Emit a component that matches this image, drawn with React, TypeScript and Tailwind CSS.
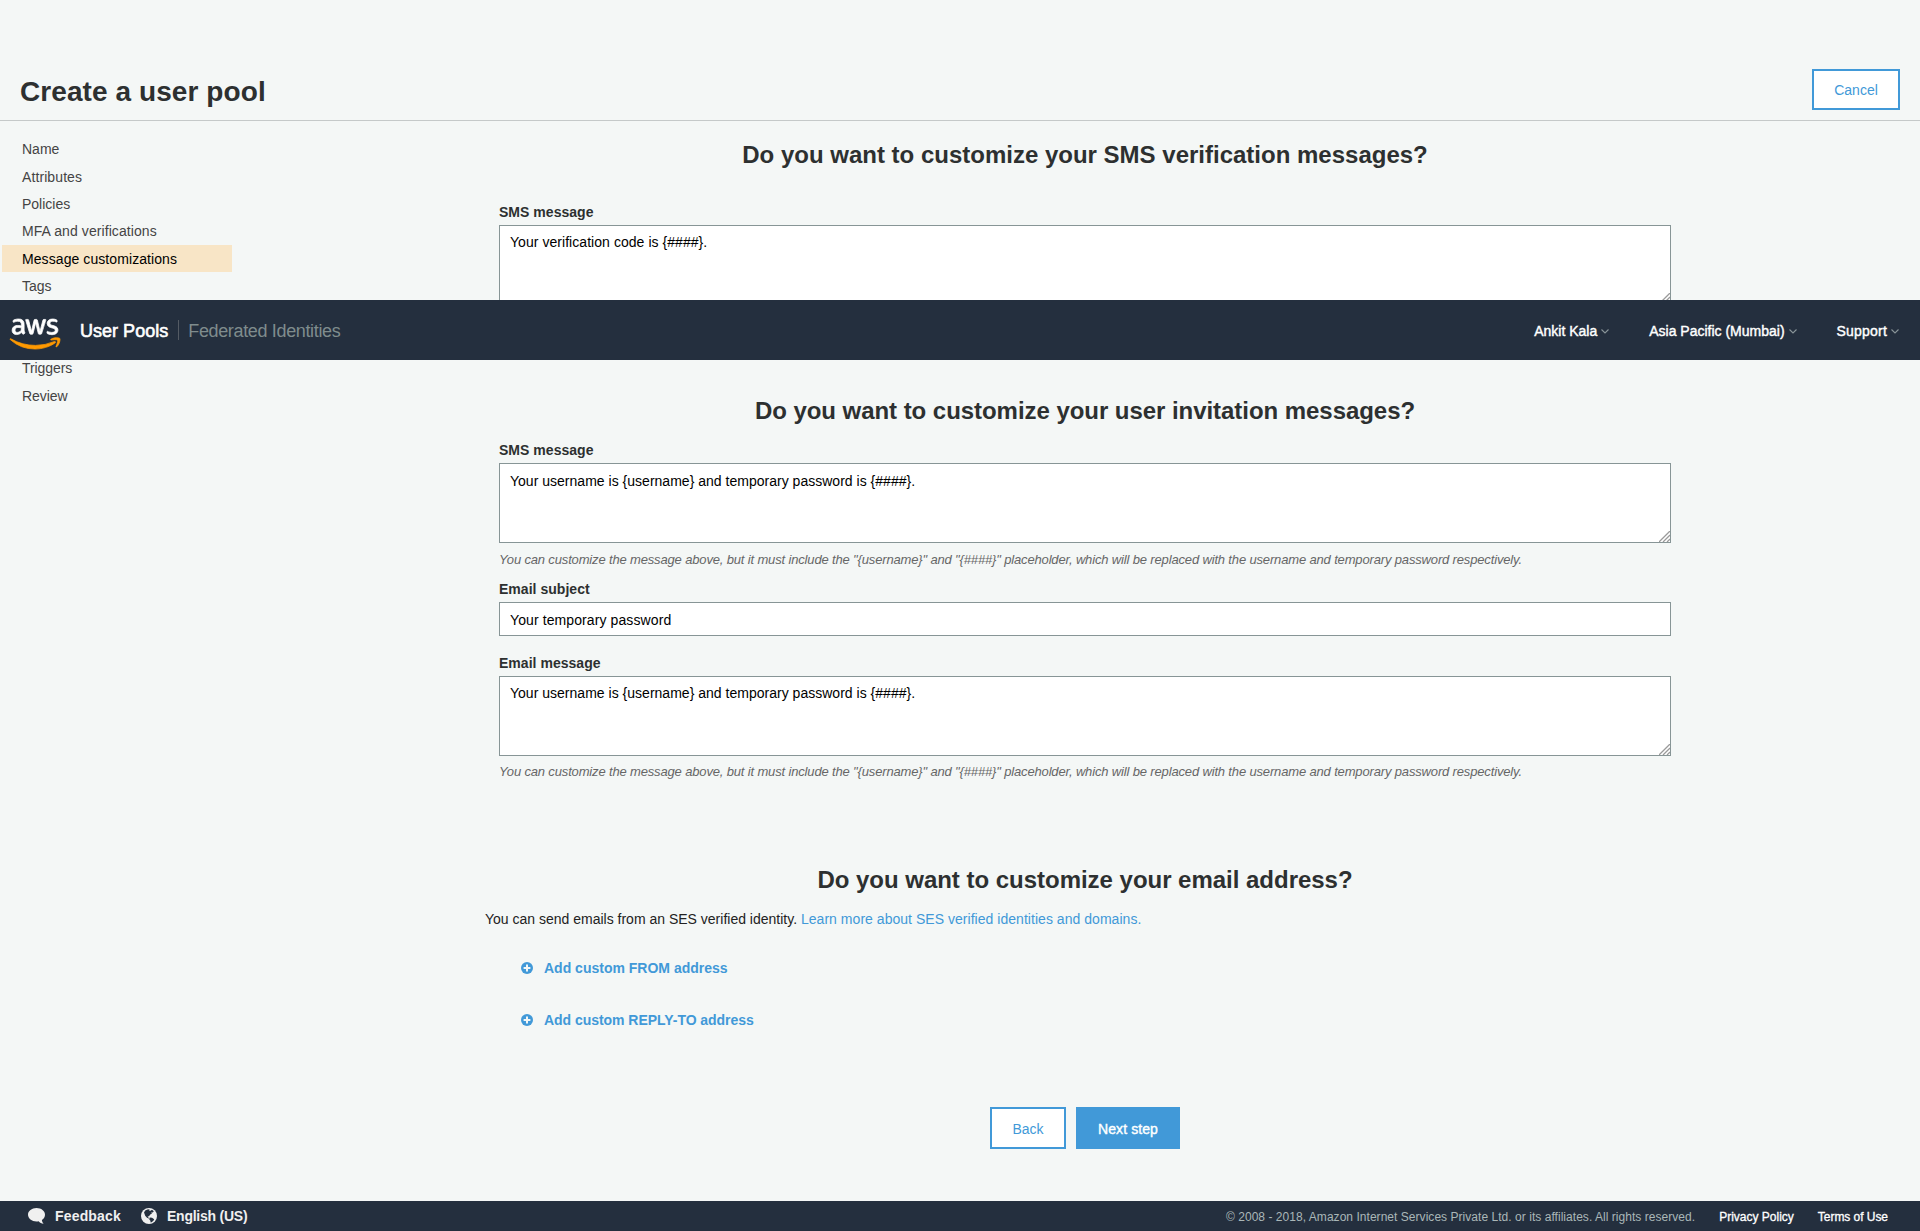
import type { ReactNode } from "react";
import { FaAws } from "react-icons/fa6";

const STEPS: { label: string; tracking?: string; active?: boolean }[] = [
  { label: "Name" },
  { label: "Attributes", tracking: "tracking-[0.096px] pt-px" },
  { label: "Policies" },
  { label: "MFA and verifications", tracking: "tracking-[0.083px]" },
  { label: "Message customizations", tracking: "tracking-[0.08px]", active: true },
  { label: "Tags" },
  { label: "Devices" },
  { label: "App clients" },
  { label: "Triggers", tracking: "tracking-[-0.08px]" },
  { label: "Review", tracking: "tracking-[-0.08px]" },
];

const INVITATION = "Your username is {username} and temporary password is {####}.";
const HINT =
  'You can customize the message above, but it must include the "{username}" and "{####}" placeholder, which will be replaced with the username and temporary password respectively.';

function Heading({ className, children }: { className: string; children: ReactNode }) {
  return (
    <h2 className={`text-center text-2xl leading-[27px] font-bold text-[#2d3030] ${className}`}>{children}</h2>
  );
}

function Label({ className, children }: { className: string; children: ReactNode }) {
  return (
    <label className={`block text-sm leading-5 font-bold tracking-[0.03px] text-[#2d3030] ${className}`}>
      {children}
    </label>
  );
}

function MessageBox({ value, className }: { value: string; className: string }) {
  return (
    <div className="relative mt-[3px] h-20">
      <textarea
        defaultValue={value}
        spellCheck={false}
        className={`block h-20 w-full resize-none border border-[#879596] bg-white px-2.5 text-sm leading-5 text-black outline-none ${className}`}
      />
      <svg className="absolute right-px bottom-px size-[11px]" viewBox="0 0 11 11" fill="none">
        <path d="M0 11 11 0M4 11l7-7M8 11l3-3" stroke="#9a9a9a" strokeWidth="1.3" />
      </svg>
    </div>
  );
}

function Hint({ className }: { className: string }) {
  return (
    <p className={`text-[13px] leading-[15px] whitespace-nowrap italic tracking-[-0.154px] text-[#666] ${className}`}>
      {HINT}
    </p>
  );
}

function AddLink({ className, children }: { className: string; children: ReactNode }) {
  return (
    <a className={`ml-9 flex h-5 items-center text-sm leading-5 font-bold text-[#4199d8] ${className}`}>
      <svg className="mr-[11px] size-3" viewBox="0 0 12 12">
        <circle cx="6" cy="6" r="6" fill="#4199d8" />
        <path d="M6 2.600v6.800M2.600 6h6.800" stroke="#f4f7f6" strokeWidth="2" />
      </svg>
      {children}
    </a>
  );
}

function NavMenu({ className, children }: { className: string; children: ReactNode }) {
  return (
    <a className={`flex items-center text-sm leading-5 text-white [-webkit-text-stroke:0.4px_white] ${className}`}>
      {children}
      <svg className="mt-px ml-1 h-[5px] w-2" viewBox="0 0 8 5" fill="none">
        <path d="M.5.5 4 4 7.500.5" stroke="#8a9599" strokeWidth="1.1" />
      </svg>
    </a>
  );
}

function NavBar() {
  return (
    <nav className="absolute inset-x-0 top-[300px] flex h-[60px] items-center bg-[#242f3e] pt-0.5 pr-[21px] pl-2.5">
      <svg className="absolute size-0">
        <linearGradient id="aws-fill" x1="0" y1="0" x2="0" y2="1">
          <stop offset="0.61" stopColor="#fff" />
          <stop offset="0.61" stopColor="#f90" />
        </linearGradient>
      </svg>
      <FaAws className="mt-[5px] h-10 w-[50px] overflow-visible [&_path]:fill-[url(#aws-fill)] [&_path]:stroke-[url(#aws-fill)] [&_path]:[stroke-width:10px]" />
      <a className="ml-5 text-lg leading-5 tracking-[0.02px] text-white [-webkit-text-stroke:0.6px_white]">
        User Pools
      </a>
      <span className="ml-2.5 h-5 w-px -translate-y-px bg-[#545b64]" />
      <a className="ml-[9px] text-lg leading-5 tracking-[-0.347px] text-[#7f8c8d]">Federated Identities</a>
      <NavMenu className="ml-auto">Ankit Kala</NavMenu>
      <NavMenu className="ml-10">Asia Pacific (Mumbai)</NavMenu>
      <NavMenu className="ml-10 tracking-[0.2px]">Support</NavMenu>
    </nav>
  );
}

function BubbleIcon() {
  return (
    <svg className="h-4 w-[17px]" viewBox="0 0 17 16" fill="#f0f0f0">
      <path d="M8.500 0C13.200 0 17 2.900 17 6.700c0 2.200-1.200 4.100-3.100 5.300.1 1.500.7 2.600 1.800 3.800-2.200-.2-3.900-1.100-5.100-2.600-.7.100-1.400.2-2.100.2C3.800 13.400 0 10.400 0 6.700S3.800 0 8.500 0Z" />
    </svg>
  );
}

function GlobeIcon() {
  return (
    <svg className="size-4" viewBox="0 0 16 16">
      <circle cx="8" cy="8" r="8" fill="#f0f0f0" />
      <path
        d="M4.200 2.600 6.400 1.400 8.600 1.200 8 2.400 9.600 2.800 11 1.700 12.800 3.200 11.800 4.600 10.400 4.300 10.800 5.800 9.200 6.600 8 8.200 6.600 8.400 7.200 9.600 8.400 9.900 7.800 10.600 6 9.800 4.200 7.800 3.400 5.600 3 4.400Z"
        fill="#242f3e"
      />
      <path d="M8.800 9.600 11 9.800 13.200 11.200 12.400 12.800 10.600 14.200 9.600 14.600 9.400 12.800 8.200 11.200Z" fill="#242f3e" />
    </svg>
  );
}

export default function App() {
  return (
    <div
      className="relative flex h-[1231px] w-[1920px] flex-col overflow-hidden bg-[#f4f7f6]"
      style={{ fontFamily: '"Liberation Sans", Arial, sans-serif' }}
    >
      <header className="flex h-[121px] shrink-0 items-end justify-between border-b border-[#c5c9c9] px-5">
        <h1 className="mb-[13px] text-[28px] leading-[31px] font-bold tracking-[0.08px] text-[#2d3030]">
          Create a user pool
        </h1>
        <button className="mb-2.5 h-[41px] w-[88px] border-2 border-[#4199d8] bg-white text-sm leading-5 text-[#4199d8]">
          Cancel
        </button>
      </header>

      <div className="flex flex-1 items-start">
        <ul className="ml-0.5 w-[230px] pt-[14.4px]">
          {STEPS.map((s) => (
            <li
              key={s.label}
              className={`flex h-[27.4px] items-center pl-5 text-sm leading-5 ${s.tracking ?? ""} ${
                s.active ? "bg-[#f8e5c6] text-black" : "text-[#444]"
              }`}
            >
              {s.label}
            </li>
          ))}
        </ul>

        <main className="mr-[235px] ml-auto w-[1200px]">
          <div className="px-3.5">
            <Heading className="mt-5">Do you want to customize your SMS verification messages?</Heading>
            <Label className="mt-[34px]">SMS message</Label>
            <MessageBox value="Your verification code is {####}." className="pt-1.5 tracking-[0.05px]" />

            <Heading className="mt-[92px] tracking-[-0.049px]">
              Do you want to customize your user invitation messages?
            </Heading>
            <Label className="mt-4">SMS message</Label>
            <MessageBox value={INVITATION} className="pt-[7px] tracking-[0.015px]" />
            <Hint className="mt-[9px]" />
            <Label className="mt-3">Email subject</Label>
            <input
              defaultValue="Your temporary password"
              spellCheck={false}
              className="mt-[3px] block h-[34px] w-full border border-[#879596] bg-white px-2.5 pt-0.5 text-sm leading-5 tracking-[0.1px] text-black outline-none"
            />
            <Label className="mt-[17px]">Email message</Label>
            <MessageBox value={INVITATION} className="pt-1.5 tracking-[0.015px]" />
            <Hint className="mt-2" />
          </div>

          <Heading className="mt-[87px] tracking-[-0.022px]">Do you want to customize your email address?</Heading>
          <p className="mt-4 text-sm leading-5 text-[#222]">
            <span>You can send emails from an SES verified identity. </span>
            <a className="tracking-[0.035px] text-[#4199d8]">Learn more about SES verified identities and domains.</a>
          </p>
          <AddLink className="mt-[29px]">Add custom FROM address</AddLink>
          <AddLink className="mt-8 tracking-[-0.04px]">Add custom REPLY-TO address</AddLink>

          <div className="mt-[77px] flex justify-center gap-2.5">
            <button className="h-[42px] w-[76px] border-2 border-[#4199d8] bg-white pt-0.5 text-sm leading-5 text-[#4199d8]">
              Back
            </button>
            <button className="h-[42px] w-[104px] bg-[#4199d8] pt-0.5 text-sm leading-5 tracking-[0.1px] text-white [-webkit-text-stroke:0.4px_white]">
              Next step
            </button>
          </div>
        </main>
      </div>

      <footer className="flex h-[30px] shrink-0 items-center bg-[#242f3e] pr-8 pl-7">
        <BubbleIcon />
        <a className="ml-2.5 text-sm leading-5 font-bold tracking-[0.171px] text-[#f0f0f0]">Feedback</a>
        <span className="ml-5">
          <GlobeIcon />
        </span>
        <a className="ml-2.5 text-sm leading-5 font-bold tracking-[-0.233px] text-[#f0f0f0]">English (US)</a>
        <span className="mt-0.5 ml-auto text-xs leading-[18px] tracking-[0.04px] text-[#aab7b8]">
          © 2008 - 2018, Amazon Internet Services Private Ltd. or its affiliates. All rights reserved.
        </span>
        <a className="mt-0.5 ml-6 text-xs leading-[18px] text-white [-webkit-text-stroke:0.3px_white]">
          Privacy Policy
        </a>
        <a className="mt-0.5 ml-6 text-xs leading-[18px] tracking-[-0.046px] text-white [-webkit-text-stroke:0.3px_white]">
          Terms of Use
        </a>
      </footer>

      <NavBar />
    </div>
  );
}
